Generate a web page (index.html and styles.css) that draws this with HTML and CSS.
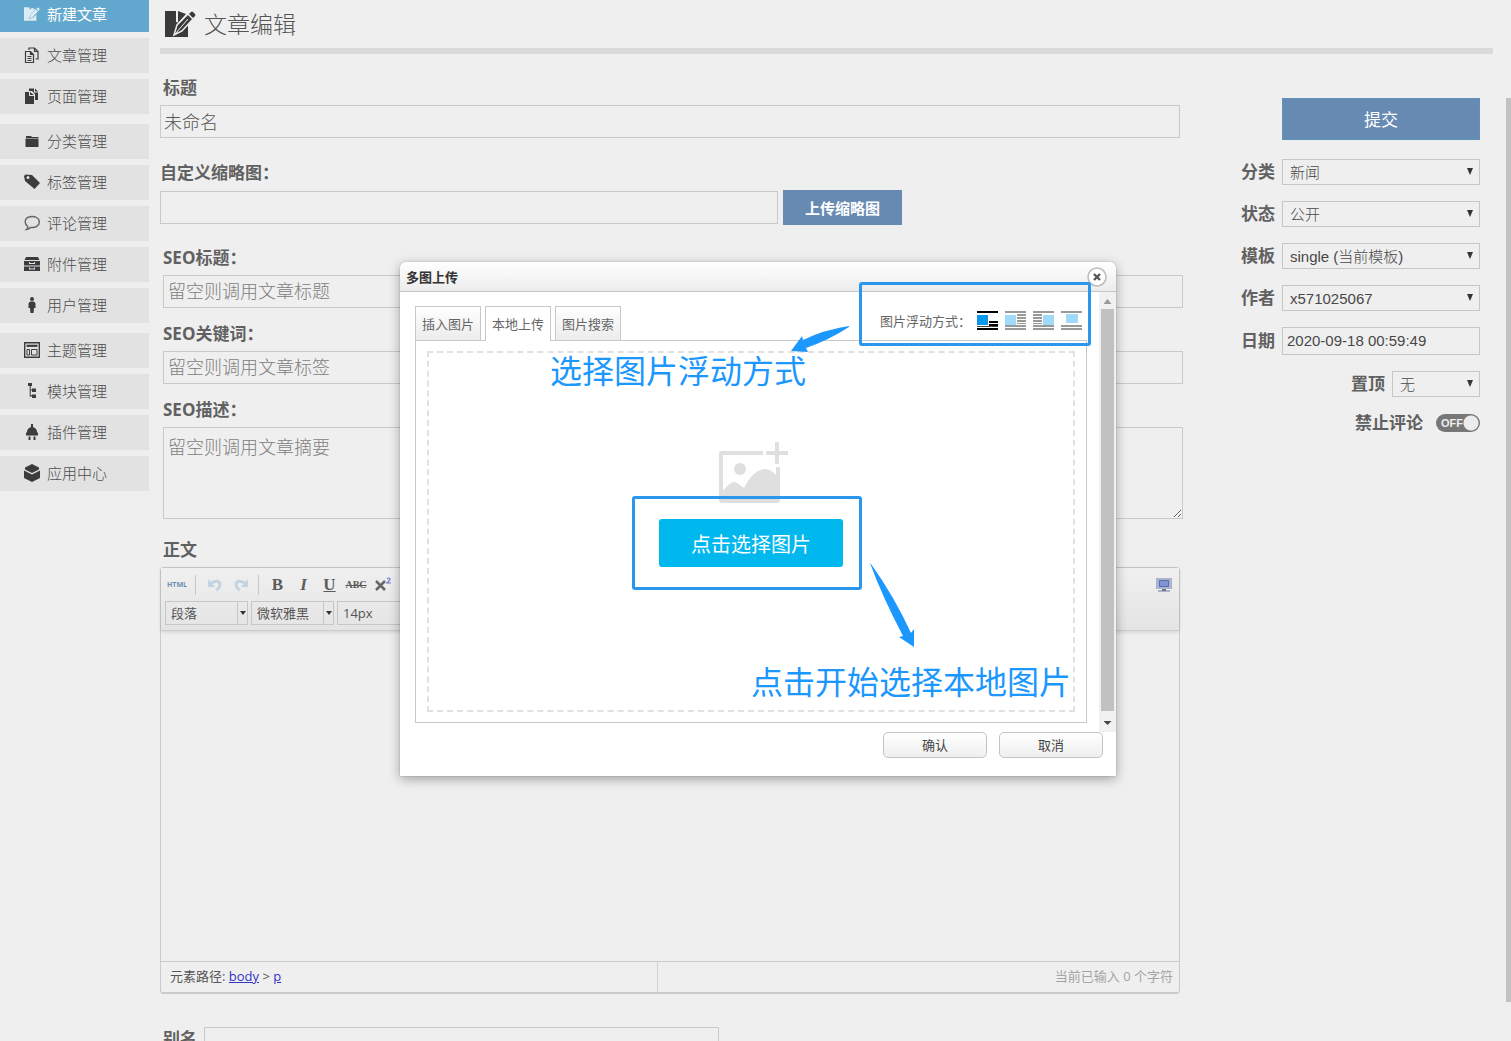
FILE: index.html
```html
<!DOCTYPE html>
<html lang="zh-CN">
<head>
<meta charset="utf-8">
<title>文章编辑</title>
<link rel="stylesheet" href="styles.css">
</head>
<body>
<div class="app">
  <nav class="sidebar">
    <a class="nav-item active" href="#"><svg class="nav-icon" viewBox="0 0 31 28"><path fill="currentColor" d="M0 1h10l2 5 3-4 7 3-10 11-3 8 9-3 6-6v12H0z"/><path fill="currentColor" d="M10 23l3-8L23 5l4 4-10 11zM24 4l2-2q1-1 2 0l2 2q1 1 0 2l-2 2z"/></svg>新建文章</a>
    <div class="nav-group">
      <a class="nav-item" href="#"><svg class="nav-icon" viewBox="0 0 16 16" fill="none" stroke="currentColor" stroke-width="1.2"><path d="M1.500 4.500h5l3 3v8h-8zM6.500 4.500v3h3M5 3V1h5.500L14 4.500V12h-2.500M10.500 1v3.500H14M3.500 9.500h4M3.500 11.500h4M3.500 13.500h4"/></svg>文章管理</a>
      <a class="nav-item" href="#"><svg class="nav-icon" viewBox="0 0 16 16" fill="currentColor"><path d="M1 4h4v4h5v8H1zM6 4l4 3H6zM5 .500h5v4h4V12h-3V6L8 3H5zM11 .500l3 3h-3z"/></svg>页面管理</a>
    </div>
    <div class="nav-group">
      <a class="nav-item" href="#"><svg class="nav-icon" viewBox="0 0 16 16" fill="currentColor"><path d="M2 3h5l1 1h6.500v1H2zM1.500 5.500h13V14h-13z"/></svg>分类管理</a>
      <a class="nav-item" href="#"><svg class="nav-icon" viewBox="0 0 16 16" fill="currentColor"><path fill-rule="evenodd" d="M0 2l1.500-1.500L8 1l8 8-5.500 6L1 7zM2.500 3.500a1.500 1.500 0 1 0 3 0 1.500 1.500 0 0 0-3 0z"/></svg>标签管理</a>
      <a class="nav-item" href="#"><svg class="nav-icon" viewBox="0 0 16 16" fill="none" stroke="#666" stroke-width="1.400"><path d="M2.500 14.500c1-1 1.400-2 1.200-3C-.5 8 .8 2.500 6 1.700c5-.9 9.300 1.300 9.300 5.200 0 4-4 6.200-8.500 5.500-1.200 1-2.700 1.800-4.300 2.100z"/></svg>评论管理</a>
      <a class="nav-item" href="#"><svg class="nav-icon" viewBox="0 0 16 16" fill="currentColor"><path fill-rule="evenodd" d="M2 1h12l1.500 3H.5zM0 5h16v4.500H0zM0 10.500h16V15H0zM5 6v2h6V6h-1v1H6V6zM5 11.500v2h6v-2h-1v1H6v-1z"/></svg>附件管理</a>
      <a class="nav-item" href="#"><svg class="nav-icon" viewBox="0 0 16 16" fill="currentColor"><circle cx="8" cy="2" r="2"/><path d="M6 4.500h4l1.500 2V11H10l-.5 5h-3L6 11H4.500V6.500z"/></svg>用户管理</a>
    </div>
    <div class="nav-group">
      <a class="nav-item" href="#"><svg class="nav-icon" viewBox="0 0 16 16" fill="none" stroke="currentColor"><path d="M.7.7h14.600v14.600H.7z" stroke-width="1.400"/><path d="M2.500 3.800h11" stroke-width="2.200"/><path d="M3 7.500h2.500v5.500H3zM7.500 7.500H13v5.500H7.500z"/></svg>主题管理</a>
      <a class="nav-item" href="#"><svg class="nav-icon" viewBox="0 0 16 16" fill="currentColor"><path d="M4 0h4v3H6.700v3.500H8V5.500h4v3.500H8V7.500H6.700v4.700H8v-.7h4V15H8v-1.500H5.700V3H4z"/></svg>模块管理</a>
      <a class="nav-item" href="#"><svg class="nav-icon" viewBox="0 0 16 16" fill="currentColor"><path d="M7 0h2v3c3 1 4 3 4 5l1 1v2.500H2V9l1-1c0-2 1-4 4-5zM4.500 12.500h2V16h-2zM9.500 12.500h2V16h-2z"/></svg>插件管理</a>
      <a class="nav-item" href="#"><svg class="nav-icon tall" viewBox="0 0 16 18" fill="currentColor"><path d="M8 0l7 3.500v2L8 9 1 5.500v-2zM0 6.500l8 4 8-4V14l-8 4-8-4z"/></svg>应用中心</a>
    </div>
  </nav>

  <main class="content">
    <header class="page-head">
      <svg class="head-icon" viewBox="0 0 31 28"><path fill="#3a3a3a" d="M0 1h11v26H0zM13 1l8 3-8 9zM11 12v15h12V15z"/><path fill="#3a3a3a" stroke="#efefef" stroke-width="1.500" d="M9 25l3-10L23 4l5 5-11 12z"/><path fill="#3a3a3a" d="M24 4l2-2q1-1 2 0l2 2q1 1 0 2l-2 2z"/><path stroke="#efefef" d="M11 23L23 9"/></svg>
      <h1>文章编辑</h1>
    </header>
    <form class="edit-form">
      <div class="main-col">
        <div class="field">
          <label class="inset" for="title">标题</label>
          <input class="text title-input" id="title" type="text" value="未命名">
        </div>
        <div class="field thumb-field">
          <label for="thumb">自定义缩略图：</label>
          <div class="thumb-row">
            <input class="text" id="thumb" type="text">
            <button class="upload" type="button">上传缩略图</button>
          </div>
        </div>
        <div class="field seo">
          <label for="seo-title">SEO标题：</label>
          <input class="text" id="seo-title" type="text" placeholder="留空则调用文章标题">
        </div>
        <div class="field seo">
          <label for="seo-key">SEO关键词：</label>
          <input class="text" id="seo-key" type="text" placeholder="留空则调用文章标签">
        </div>
        <div class="field seo">
          <label for="seo-desc">SEO描述：</label>
          <textarea class="text" id="seo-desc" placeholder="留空则调用文章摘要"></textarea>
        </div>
        <h2 class="inset body-label">正文</h2>
        <section class="editor">
          <div class="toolbar">
            <div class="tool-row">
              <button class="tool html" type="button">HTML</button>
              <span class="sep"></span>
              <button class="tool" type="button" aria-label="撤销"><svg width="16" height="16" viewBox="0 0 16 16" fill="none" stroke="#c3d3e2" stroke-width="3"><path d="M4 6q8-4 9 1 0 4-4 6"/><path d="M1 2v8h7z" fill="#c3d3e2" stroke="none"/></svg></button>
              <button class="tool" type="button" aria-label="重做"><svg width="16" height="16" viewBox="0 0 16 16" fill="none" stroke="#c3d3e2" stroke-width="3"><path d="M12 6Q4 2 3 7q0 4 4 6"/><path d="M15 2v8H8z" fill="#c3d3e2" stroke="none"/></svg></button>
              <span class="sep second"></span>
              <button class="tool serif" type="button"><b>B</b></button>
              <button class="tool serif" type="button"><i>I</i></button>
              <button class="tool serif" type="button"><u>U</u></button>
              <button class="tool strike" type="button"><s>ABC</s></button>
              <button class="tool" type="button" aria-label="上标"><svg width="18" height="16" viewBox="0 0 18 16" fill="none"><path d="M2 4l9 9M11 4l-9 9" stroke="#666" stroke-width="2.500"/><path d="M13 2q2-2 3 0 0 1-3 4h4" stroke="#6a7bd8" stroke-width="1.200"/></svg></button>
              <button class="tool preview" type="button" aria-label="预览"><svg width="16" height="16" viewBox="0 0 16 16"><path fill="#a9b4cf" d="M0 1h16v11H0zM2 13h12v2H2z"/><path fill="#7f94d4" stroke="#5b6dab" d="M3.500 3.500h9v6h-9z"/><path fill="#777" d="M6 12h4v2H6z"/></svg></button>
            </div>
            <div class="tool-row">
              <button class="combo" type="button">段落<span class="drop"></span></button>
              <button class="combo" type="button">微软雅黑<span class="drop"></span></button>
              <button class="combo" type="button">14px<span class="drop"></span></button>
            </div>
          </div>
          <div class="editor-body" contenteditable="true"></div>
          <footer class="editor-status">
            <div class="path">元素路径: <a href="#">body</a> &gt; <a href="#">p</a></div>
            <div class="count">当前已输入 0 个字符</div>
          </footer>
        </section>
        <div class="slug-row">
          <label for="slug">别名</label>
          <input class="text" id="slug" type="text">
        </div>
      </div>

      <aside class="side-col">
        <button class="submit" type="submit">提交</button>
        <div class="side-row"><label for="cate">分类</label><span class="select"><select id="cate"><option>新闻</option></select></span></div>
        <div class="side-row"><label for="status">状态</label><span class="select"><select id="status"><option>公开</option></select></span></div>
        <div class="side-row"><label for="tpl">模板</label><span class="select"><select id="tpl"><option>single (当前模板)</option></select></span></div>
        <div class="side-row"><label for="author">作者</label><span class="select"><select id="author"><option>x571025067</option></select></span></div>
        <div class="side-row"><label for="date">日期</label><input class="date" id="date" type="text" value="2020-09-18 00:59:49"></div>
        <div class="side-row"><label for="top">置顶</label><span class="select short"><select id="top"><option>无</option></select></span></div>
        <div class="side-row toggle-row"><label for="lock">禁止评论</label><span class="toggle"><input id="lock" type="checkbox"><span>OFF</span></span></div>
      </aside>
    </form>
  </main>
  <div class="page-scroll"></div>
</div>

<div class="dialog" role="dialog" aria-labelledby="dialog-title">
  <header class="dialog-head">
    <h2 id="dialog-title">多图上传</h2>
    <button class="close" type="button" aria-label="关闭"><svg width="20" height="20" viewBox="0 0 20 20"><circle cx="10" cy="10" r="9" fill="#fff" stroke="#bbb" stroke-width="1.500"/><path d="M7 7l6 6M13 7l-6 6" stroke="#555" stroke-width="2.400"/></svg></button>
  </header>
  <div class="dialog-body">
    <div class="dialog-page">
      <div class="tab-row">
        <button class="tab" type="button">插入图片</button>
        <button class="tab current" type="button">本地上传</button>
        <button class="tab" type="button">图片搜索</button>
        <div class="float-mode">
          <span class="float-label">图片浮动方式：</span>
          <button type="button" aria-label="默认"><svg width="22" height="20" viewBox="0 0 22 20"><path d="M0 0h21v2H0zM12 10h9v2h-9zM12 13h9v2h-9zM0 17h21v2H0z" fill="#000"/><path d="M0 4h11v10H0z" fill="#0a99ea"/><path d="M0 15h21v1H0z" fill="#444"/></svg></button>
          <button type="button" aria-label="左浮动"><svg width="22" height="20" viewBox="0 0 22 20"><path d="M0 0h21v2H0zM12 3h9v2h-9zM12 6h9v2h-9zM12 9h9v2h-9zM12 12h9v1h-9zM0 14h21v2H0zM0 17h21v2H0z" fill="#999"/><path d="M0 4h11v10H0z" fill="#9fdaf8"/></svg></button>
          <button type="button" aria-label="右浮动"><svg width="22" height="20" viewBox="0 0 22 20"><path d="M0 0h21v2H0zM0 3h9v2H0zM0 6h9v2H0zM0 9h9v2H0zM0 12h9v1H0zM0 14h21v2H0zM0 17h21v2H0z" fill="#999"/><path d="M10 4h11v10H10z" fill="#9fdaf8"/></svg></button>
          <button type="button" aria-label="居中"><svg width="22" height="20" viewBox="0 0 22 20"><path d="M0 0h21v2H0zM0 14h21v2H0zM0 17h21v2H0z" fill="#999"/><path d="M5 3h12v9H5z" fill="#9fdaf8"/></svg></button>
        </div>
      </div>
      <div class="panel">
        <div class="dropzone">
          <svg class="pic-icon" width="70" height="61" viewBox="0 0 70 61" fill="#dfdfdf"><path d="M3 9h41v4H4v36q7-9 11-9 3 0 10 6 9-18 21-19 6 0 11 6v-8h4v33q0 3-3 3H3q-3 0-3-3V12q0-3 3-3z"/><circle cx="21" cy="27" r="6"/><path d="M56 0h4v9h9v4h-9v9h-4v-9h-9V9h9z"/></svg>
          <button class="pick" type="button">点击选择图片</button>
        </div>
      </div>
    </div>
    <div class="dialog-scroll"><span class="arrow up"></span><span class="thumb"></span><span class="arrow down"></span></div>
  </div>
  <footer class="dialog-foot">
    <button type="button">确认</button>
    <button type="button">取消</button>
  </footer>

  <div class="mark mark-float"></div>
  <div class="mark mark-pick"></div>
  <p class="note note-float">选择图片浮动方式</p>
  <p class="note note-pick">点击开始选择本地图片</p>
  <svg class="pointer pointer-float" width="59" height="28" viewBox="0 0 59 28"><path fill="#1c97fd" d="M0 25L11 10l1 4Q32 4 58 0v1Q38 14 15 22l2 4z"/></svg>
  <svg class="pointer pointer-pick" width="45" height="84" viewBox="0 0 45 84"><path fill="#1c97fd" d="M0 0l1 1Q24 33 41 70l3-4v18L29 74l4-1Q12 33 0 0z"/></svg>
</div>
</body>
</html>
```
FILE: styles.css
```css
* { box-sizing: border-box; }

html, body { height: 100%; }

body {
  margin: 0;
  overflow: hidden;
  position: relative;
  background: #efefef;
  color: #555;
  font: 15px/20px "Open Sans", "Noto Sans CJK SC", sans-serif;
}

button, input, select, textarea { margin: 0; font-family: inherit; color: inherit; border-radius: 0; }
button { padding: 0; border: 0; background: none; }
h1, h2, p { margin: 0; }

.app { display: flex; height: 100%; overflow: hidden; }

/* Sidebar */
.sidebar { width: 149px; flex: none; }
.nav-group { display: flex; flex-direction: column; gap: 6px; margin-bottom: 10px; }
.nav-item {
  display: flex;
  align-items: center;
  gap: 7px;
  height: 35px;
  padding: 0 0 2px 24px;
  background: #e2e2e2;
  color: #4c4c4c;
  font-weight: 300;
  text-decoration: none;
}
.nav-item.active { height: 32px; padding-bottom: 4px; margin-bottom: 6px; background: #62a8ce; color: #fff; font-weight: 400; }
.nav-icon { width: 16px; height: 16px; flex: none; color: #3c3c3c; }
.nav-icon.tall { height: 18px; }
.active .nav-icon { color: #dcecf5; }

/* Content */
.content { flex: 1; min-width: 0; padding: 0 13px 0 11px; }
.page-head {
  display: flex;
  align-items: center;
  gap: 8px;
  height: 54px;
  padding-left: 5px;
  border-bottom: 6px solid #dadada;
}
.head-icon { width: 31px; height: 28px; }
.page-head h1 { font-size: 23px; line-height: 32px; font-weight: 300; }

.edit-form { display: flex; justify-content: space-between; gap: 57px; padding-right: 13px; }
.main-col { flex: 1; min-width: 0; padding-top: 22px; }

.main-col label, .body-label, .side-row label { font-size: 17px; line-height: 24px; font-weight: 700; color: #616161; }
.field { display: flex; flex-direction: column; gap: 5px; margin-right: 3px; }
.inset { padding-left: 3px; }
.text {
  width: 100%;
  height: 33px;
  padding: 0 4px 2px;
  border: 1px solid #c9c9c9;
  background: transparent;
  font-size: 18px;
  font-weight: 300;
}
.title-input { padding: 0 3px 2px; }
.text::placeholder { color: #808080; opacity: 1; }
.thumb-field { margin-top: 23px; margin-bottom: 21px; }
.thumb-row { display: flex; align-items: center; gap: 5px; }
.thumb-row .text { width: 618px; }
.upload { width: 119px; height: 35px; background: #678ab3; color: #fff; font-size: 15px; font-weight: 700; }
.seo { margin: 0 0 14px 3px; }
textarea.text { display: block; height: 92px; padding: 7px 4px; line-height: 24px; resize: vertical; }
.body-label { margin: 19px 0 5px; }

/* Editor */
.editor { margin-right: 3px; border: 1px solid #cbcbcb; border-bottom-width: 2px; border-radius: 4px; }
.toolbar {
  display: flex;
  flex-direction: column;
  gap: 3px;
  height: 63px;
  padding: 4px;
  border-bottom: 1px solid #cbcbcb;
  background: linear-gradient(#f0f0f0, #e4e4e4);
  box-shadow: 0 1px 4px #0002;
}
.tool-row { display: flex; align-items: center; gap: 3px; height: 25px; }
.tool { display: flex; align-items: center; justify-content: center; width: 23px; height: 22px; color: #5c5c5c; }
.html { width: 24px; margin-right: 3px; font-size: 7px; font-weight: 700; color: #6a8faf; }
.sep { width: 1px; height: 20px; margin-right: 4px; background: #c8c8c8; }
.sep.second { margin-left: 3px; }
.serif { font: 17px/22px "Liberation Serif", serif; font-weight: 700; }
.strike { width: 24px; font: 10px/22px "Liberation Serif", serif; font-weight: 700; }
.preview { margin-left: auto; }
.combo {
  display: flex;
  align-items: center;
  justify-content: space-between;
  width: 83px;
  height: 24px;
  padding-left: 5px;
  border: 1px solid #c6c6c6;
  font-size: 13px;
}
.drop { display: flex; align-items: center; justify-content: center; width: 10px; height: 22px; border-left: 1px solid #c6c6c6; }
.drop::after { content: ""; border: solid transparent; border-width: 4px 3px 0; border-top-color: #333; }
.editor-body { height: 330px; outline: 0; }
.editor-status { display: flex; height: 31px; border-top: 1px solid #cbcbcb; font-size: 13px; line-height: 29px; }
.path { width: 497px; padding-left: 9px; border-right: 1px solid #d2d2d2; }
.path a { color: #33c; }
.count { flex: 1; padding-right: 6px; text-align: right; color: #a4a4a4; }

.slug-row { display: flex; gap: 7px; margin-top: 33px; padding-left: 3px; }
.slug-row .text { width: 515px; }

/* Publishing options */
.side-col { display: flex; flex-direction: column; gap: 16px; width: 240px; flex: none; padding-top: 44px; }
.submit { width: 198px; height: 42px; margin: 0 0 3px auto; padding-bottom: 2px; border: 1px solid #5f92b8; background: #678ab3; color: #fff; font-size: 17px; }
.side-row { display: flex; align-items: center; justify-content: flex-end; gap: 7px; }
.select { position: relative; width: 198px; height: 26px; }
.select.short { width: 88px; }
.select::after {
  content: "";
  position: absolute;
  right: 7px;
  top: 9px;
  border: solid transparent;
  border-width: 7px 3px 0;
  border-top-color: #333;
  pointer-events: none;
}
.select select, .date {
  display: block;
  width: 100%;
  height: 100%;
  padding: 0 7px;
  appearance: none;
  border: 1px solid #c6c6c6;
  background: transparent;
  color: #484848;
  font: 15px "Liberation Sans", "Noto Sans CJK SC", sans-serif;
  font-weight: 300;
}
.date { width: 198px; height: 28px; padding: 0 4px 2px; }
.side-row.toggle-row { gap: 13px; height: 20px; }
.toggle { position: relative; width: 44px; height: 18px; }
.toggle input { appearance: none; display: block; width: 44px; height: 18px; border-radius: 9px; background: radial-gradient(circle at 35px 9px, #ececec 7px, #777 8px); }
.toggle span { position: absolute; left: 5px; top: 0; color: #eee; font: 700 11px/18px "Liberation Sans", sans-serif; pointer-events: none; }

.page-scroll { width: 5px; margin: 98px 0 39px; background: #c1c1c1; }

/* Upload dialog */
.dialog {
  position: absolute;
  left: 400px;
  top: 262px;
  width: 716px;
  height: 514px;
  border-radius: 6px 6px 0 0;
  background: #fff;
  box-shadow: 0 3px 12px #0005, 0 0 1px #0008;
  font-size: 13px;
}
.dialog-head {
  display: flex;
  align-items: center;
  justify-content: space-between;
  height: 30px;
  padding: 0 9px 0 6px;
  border-bottom: 1px solid #c4c4c4;
  border-radius: 6px 6px 0 0;
  background: linear-gradient(#fff, #ececec);
}
.dialog-head h2 { font-size: 13px; line-height: 20px; font-weight: 700; color: #333; }
.close { width: 20px; height: 20px; }
.close svg { display: block; }
.dialog-body { display: flex; height: 440px; }
.dialog-page { flex: 1; padding: 14px 12px 9px 15px; display: flex; flex-direction: column; }
.tab-row { display: flex; gap: 4px; height: 34px; }
.tab {
  width: 66px;
  height: 34px;
  border: 1px solid #c8c8c8;
  border-bottom: 0;
  background: linear-gradient(#fff, #ececec);
  color: #666;
  font-size: 13px;
}
.tab.current { position: relative; height: 35px; padding-bottom: 2px; background: #fff; }
.float-mode { display: flex; align-items: center; gap: 6px; margin-left: auto; padding: 0 4px 4px 0; }
.float-mode svg { display: block; }
.float-label { color: #666; }
.panel { flex: 1; padding: 10px 11px; border: 1px solid #c8c8c8; }
.dropzone { display: flex; flex-direction: column; align-items: center; height: 100%; padding-top: 89px; border: 2px dashed #e1e1e1; }
.pic-icon { flex: none; margin-left: 6px; }
.pick { width: 184px; height: 48px; margin-top: 16px; border-radius: 3px; background: #00b7ee; color: #fff; font-size: 20px; }
.dialog-scroll { display: flex; flex-direction: column; align-items: center; width: 17px; background: #f1f1f1; }
.dialog-scroll .thumb { flex: 1; width: 13px; background: #c1c1c1; }
.arrow { width: 8px; }
.arrow.up { height: 17px; background: #999; clip-path: polygon(50% 7px, 100% 12px, 0 12px); }
.arrow.down { height: 21px; background: #444; clip-path: polygon(0 10px, 100% 10px, 50% 14px); }
.dialog-foot { display: flex; justify-content: flex-end; gap: 12px; padding-right: 13px; }
.dialog-foot button { width: 104px; height: 26px; padding-bottom: 2px; border: 1px solid #c4c4c4; border-radius: 5px; background: linear-gradient(#fff, #efefef); color: #444; font-size: 13px; }

/* Callouts over the dialog */
.mark { position: absolute; border: 3px solid #2a97ec; border-radius: 3px; pointer-events: none; }
.mark-float { left: 459px; top: 20px; width: 232px; height: 64px; }
.mark-pick { left: 232px; top: 234px; width: 230px; height: 94px; }
.note { position: absolute; color: #1c97fd; font-size: 32px; line-height: 40px; white-space: nowrap; }
.note-float { left: 150px; top: 89px; }
.note-pick { left: 351px; top: 400px; }
.pointer { position: absolute; }
.pointer-float { left: 391px; top: 64px; }
.pointer-pick { left: 470px; top: 301px; }
```
